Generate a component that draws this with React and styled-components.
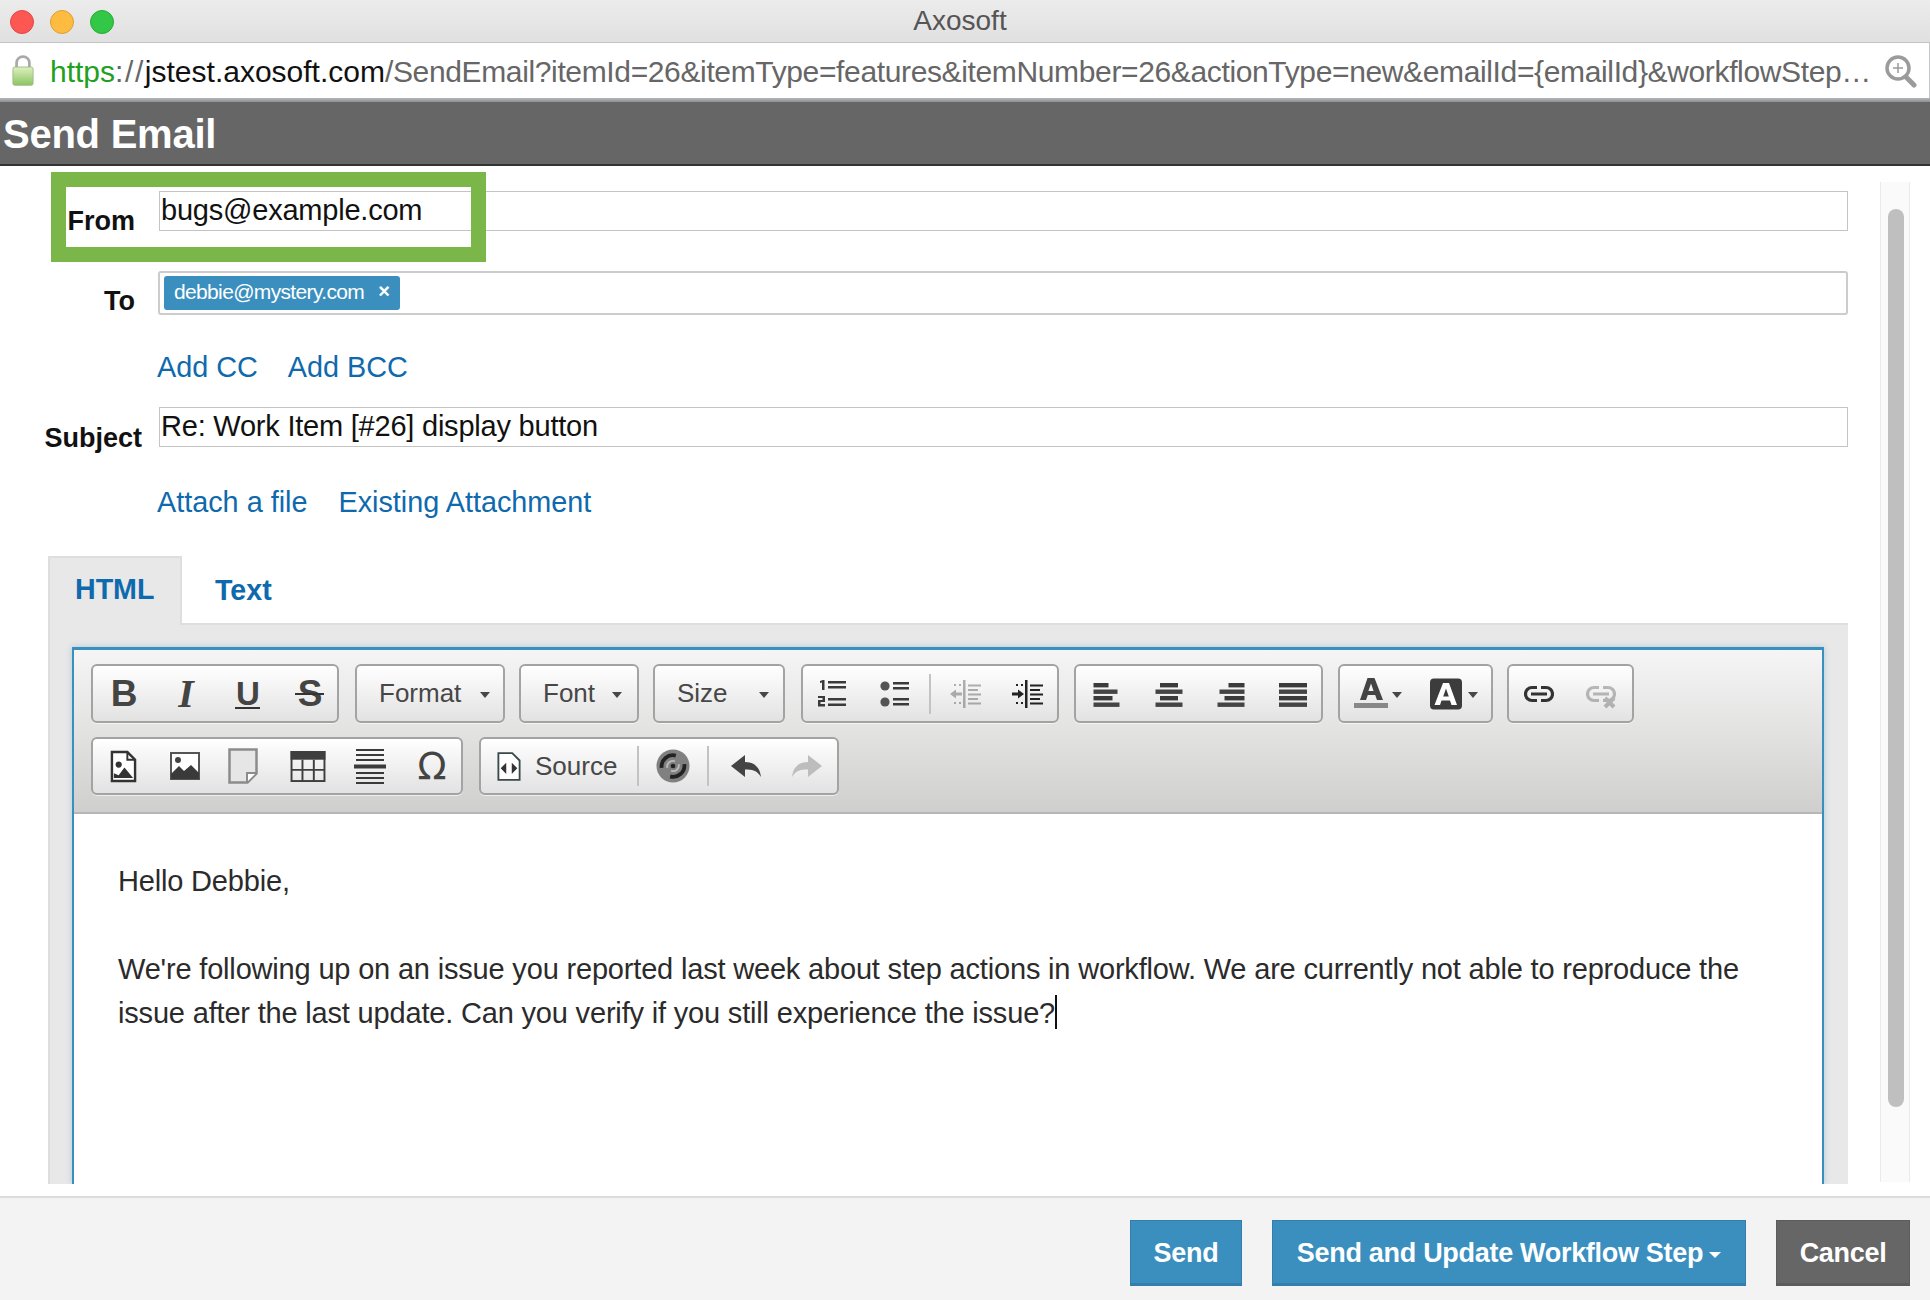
import React from "react";
import styled, { createGlobalStyle } from "styled-components";

const Global = createGlobalStyle`
  html, body { margin: 0; padding: 0; height: 100%; background: #fff; }
  #root { height: 1300px; }
  * { box-sizing: border-box; }
  body { font-family: "Liberation Sans", Arial, sans-serif; }
`;

const Page = styled.div`
  width: 1930px; height: 1300px; display: flex; flex-direction: column; overflow: hidden; background: #fff;
`;
const TitleBar = styled.div`
  height: 43px; flex: none; position: relative; display: flex; align-items: center; justify-content: center;
  background: linear-gradient(#ececec, #e0e0e0); border-bottom: 1px solid #c4c4c4;
  font-size: 28px; color: #555; padding-right: 10px;
`;
const Lights = styled.div`
  position: absolute; left: 10px; top: 10px; display: flex; gap: 16px;
`;
const Light = styled.span`
  width: 24px; height: 24px; border-radius: 50%; background: ${p => p.$c}; border: 1px solid ${p => p.$b};
`;
const AddressBar = styled.div`
  height: 55px; flex: none; display: flex; align-items: center; background: #fff; padding: 0 12px 0 12px;
  border-right: 1px solid #c4c8cc;
`;
const Url = styled.div`
  flex: 1; min-width: 0; margin-left: 16px; padding-top: 2px; font-size: 30px; color: #666; white-space: nowrap;
`;
const Https = styled.span` color: #1fa01f; `;
const Scheme = styled.span` letter-spacing: 1.6px; `;
const Host = styled.span` color: #111; `;
const UrlPath = styled.span` letter-spacing: -0.36px; `;
const AddressEdge = styled.div`
  height: 4px; flex: none; background: linear-gradient(#b4b8bc, #8d9094);
`;
const Header = styled.div`
  height: 64px; flex: none; background: #666; border-bottom: 2px solid #333; color: #fff;
  font-weight: 700; font-size: 40px; line-height: 65px; padding-left: 3px; letter-spacing: -0.25px;
`;
const Body = styled.div`
  flex: 1; min-height: 0; display: flex; overflow: hidden; position: relative;
`;
const Form = styled.div`
  width: 1848px; flex: none; height: 1018px; padding: 25px 0 0 0; overflow: hidden;
  display: flex; flex-direction: column;
`;
const Row = styled.div`
  display: flex; align-items: flex-start; position: relative; flex: none;
  height: ${p => p.$h}px;
  margin-top: ${p => p.$mt || 0}px;
`;
const Label = styled.div`
  width: ${p => p.$w || 135}px; margin-right: ${p => p.$mr || 23}px; text-align: right; font-weight: 700; font-size: 27px; color: #111; flex: none; padding-top: ${p => p.$pt || 0}px;
`;
const TextField = styled.div`
  flex: 1; height: 40px; border: 1px solid #c4c4c4; padding: 1px 0 0 1px; font-size: 29px; letter-spacing: -0.22px; line-height: 34px; color: #111; margin-left: 1px;
`;
const Highlight = styled.div`
  position: absolute; left: 51px; top: -19px; width: 435px; height: 90px; border: 15px solid #7ab648; pointer-events: none;
`;
const TagField = styled.div`
  flex: 1; height: 44px; border: 2px solid #ccc; border-radius: 3px; padding: 3px 4px;
`;
const Tag = styled.span`
  display: inline-flex; align-items: center; height: 34px; width: 236px; padding: 0 0 3px 10px; background: #3a8fbf; border-radius: 3px;
  color: #fff; font-size: 21px; letter-spacing: -0.65px;
`;
const TagX = styled.span`
  margin-left: 14px; font-weight: 700; font-size: 20px; letter-spacing: 0;
`;
const Links = styled.div`
  display: flex; flex: none; gap: ${p => p.$gap}px; padding-left: 157px; margin-top: ${p => p.$mt}px; font-size: 28.8px; line-height: 34px; color: #0e69ad;
`;
const Tabs = styled.div`
  display: flex; height: 69px; margin: 37px 0 0 48px; flex: none;
`;
const Tab = styled.div`
  width: ${p => p.$w}px; font-weight: 700; font-size: 28.6px; color: #0e69ad; padding: ${p => p.$active ? 15 : 18}px 0 0 ${p => p.$pl}px;
  background: ${p => p.$active ? "#e8e8e8" : "transparent"};
  border: ${p => p.$active ? "2px solid #dedede" : "none"};
  border-bottom: ${p => p.$active ? "none" : "2px solid #dedede"};
`;
const TabRule = styled.div`
  flex: 1; align-self: flex-end; height: 2px; background: #dedede;
`;
const Panel = styled.div`
  margin-left: 48px; flex: 1; min-height: 0; background: #e8e8e8; border-left: 2px solid #dedede; padding: 22px 24px 0 22px;
`;
const Editor = styled.div`
  height: 100%; border: 2px solid #3a8fbf; border-top-width: 3px; border-bottom: none; background: #fff; display: flex; flex-direction: column;
  box-shadow: 0 0 6px rgba(58,143,191,.35);
`;
const Toolbar = styled.div`
  height: 164px; flex: none; background: linear-gradient(#f5f5f5, #cfd0ce); border-bottom: 2px solid #b6b6b6;
  padding: 14px 0 0 17px; display: flex; flex-direction: column; gap: 14px;
`;
const ToolRow = styled.div`
  display: flex; gap: ${p => p.$gap}px;
`;
const Group = styled.div`
  width: ${p => p.$w}px; height: ${p => p.$h || 59}px; flex: none; display: flex; align-items: center; position: relative;
  border: 2px solid #a3a3a3; border-radius: 6px; background: linear-gradient(#fff, #e2e2e2);
  margin-left: ${p => p.$ml || 0}px;
  padding-left: ${p => p.$pl || 0}px; color: #444; box-shadow: 0 1px 0 rgba(255,255,255,.6);
`;
const Combo = styled(Group)`
  font-size: 26px; color: #474747; padding-left: 22px;
`;
const Caret = styled.span`
  position: absolute; right: ${p => p.$r}px; top: 26px; width: 0; height: 0;
  border-left: 5.5px solid transparent; border-right: 5.5px solid transparent; border-top: 6px solid #474747;
`;
const Tool = styled.span`
  width: ${p => p.$w || 62}px; flex: none; display: flex; align-items: center; justify-content: center; height: 100%; position: relative;
  opacity: ${p => p.$dim ? 0.38 : 1};
`;
const SansLetter = styled(Tool)`
  font-weight: 700; font-size: 37px; color: #444;
`;
const ItalicLetter = styled(Tool)`
  font-family: "Liberation Serif", serif; font-style: italic; font-weight: 700; font-size: 40px; color: #444;
`;
const UnderLetter = styled(SansLetter)`
  font-size: 33px;
  &::after { content: ""; position: absolute; left: 18px; width: 25px; top: 41px; height: 2px; background: #333; }
`;
const StrikeLetter = styled(SansLetter)`
  &::after { content: ""; position: absolute; left: 16px; width: 29px; top: 27px; height: 2px; background: #333; }
`;
const OmegaLetter = styled(Tool)`
  font-family: "DejaVu Sans", sans-serif; font-size: 38px; color: #444;
`;
const Sep = styled.span`
  width: 2px; height: 40px; flex: none; background: #c3c3c3;
`;
const SourceLabel = styled.span`
  font-size: 26px; color: #474747; margin: 0 20px 0 14px;
`;
const Content = styled.div`
  flex: 1; padding: 45px 60px 0 44px; font-size: 29px; line-height: 44px; color: #2b2b2b; letter-spacing: -0.18px;
`;
const Para = styled.p`
  margin: 0 0 44px 0;
`;
const CaretBar = styled.span`
  display: inline-block; width: 2px; height: 34px; background: #111; vertical-align: -6px;
`;
const ScrollTrack = styled.div`
  position: absolute; left: 1880px; top: 16px; width: 30px; height: 1000px; background: #fafafa;
  border-left: 1px solid #ebebeb; border-right: 1px solid #ebebeb;
`;
const ScrollThumb = styled.div`
  position: absolute; left: 7px; top: 27px; width: 16px; height: 898px; border-radius: 8px; background: #bfbfbf;
`;
const Footer = styled.div`
  height: 104px; flex: none; background: #f3f3f3; border-top: 2px solid #dcdcdc; display: flex; justify-content: flex-end;
  padding: 22px 20px 0 0; gap: 30px;
`;
const Button = styled.div`
  height: 66px; display: flex; align-items: center; justify-content: center; gap: 6px; width: ${p => p.$w}px; padding-top: 3px;
  background: ${p => p.$grey ? "#666" : "#3a8fbf"}; border: 1px solid ${p => p.$grey ? "#5c5c5c" : "#327fae"}; border-bottom-width: 3px;
  color: #fff; font-weight: 700; font-size: 27px; letter-spacing: -0.3px;
`;
const BtnCaret = styled.span`
  width: 0; height: 0; border-left: 6px solid transparent; border-right: 6px solid transparent; border-top: 6px solid #fff; margin-top: 3px;
`;

const I = ({ w = 32, h = 32, vb = "0 0 32 32", children, c = "#3a3a3a" }) => (
  <svg width={w} height={h} viewBox={vb} fill={c} stroke="none">{children}</svg>
);

const Lock = () => (
  <svg width="22" height="33" viewBox="0 0 24 38" preserveAspectRatio="none">
    <path d="M5 17V10a7 7 0 0 1 14 0v7" fill="none" stroke="#a9a9a9" strokeWidth="3" />
    <defs><linearGradient id="lk" x1="0" y1="0" x2="0" y2="1"><stop offset="0" stopColor="#dff0c0" /><stop offset="1" stopColor="#8cc463" /></linearGradient></defs>
    <rect x="1" y="15" width="22" height="21" rx="2" fill="url(#lk)" stroke="#9bb985" />
  </svg>
);
const Zoom = () => (
  <svg width="32" height="36" viewBox="0 0 32 36">
    <circle cx="13" cy="15" r="11" fill="#fff" stroke="#9b9b9b" strokeWidth="3.5" />
    <path d="M21 24l8 8" stroke="#9b9b9b" strokeWidth="5" strokeLinecap="round" />
    <path d="M13 10v10M8 15h10" stroke="#9b9b9b" strokeWidth="1.5" />
  </svg>
);
const OL = () => (
  <I>
    <path d="M4 3l3-1h1.500v10H6V4.500L4 5zM2 18h7v6H4.500v2H9v2.500H2V22h4.500v-2H2z" />
    <path d="M12 3h18v2.600H12zM12 8h18v2.600H12zM12 20h18v2.600H12zM12 25.500h18v2.600H12z" />
  </I>
);
const UL = () => (
  <I>
    <circle cx="6" cy="8" r="4.600" fill="#555" /><circle cx="6" cy="24" r="4.600" fill="#555" />
    <path d="M14 4h16v2.600H14zM14 9h16v2.600H14zM14 20h16v2.600H14zM14 25h16v2.600H14z" />
  </I>
);
const Indent = ({ flip, c }) => (
  <I c={c}>
    <rect x="14" y="2" width="2.500" height="28" />
    <path d="M19 6.500h13v2H19zM19 11h10v2H19zM19 15.500h13v2H19zM19 20h10v2H19zM19 24.500h13v2H19z" />
    <path d="M5 6h2v2H5zM10 6h2v2h-2zM5 24h2v2H5zM10 24h2v2h-2z" />
    {flip
      ? <path d="M1 16l6-4.500v3h6v3H7v3z" />
      : <path d="M13 16l-6-4.500v3H1v3h6v3z" />}
  </I>
);
const Align = ({ rows }) => (
  <I>
    {rows.map((r, k) => <rect key={k} x={r[0]} y={5 + k * 6.5} width={r[1]} height="4.400" fill={k % 2 ? "#444" : "#3a3a3a"} />)}
  </I>
);
const FontColor = () => (
  <I vb="0 0 34 34" w={34} h={34}>
    <path d="M13.500 1h7L29 23h-6l-1.800-5h-7.400L12 23H6zM17 6.500L14.400 14h5.200z" fill="#444" fillRule="evenodd" />
    <rect x="0" y="26" width="34" height="5" fill="#888" />
  </I>
);
const BgColor = () => (
  <I>
    <rect x="0" y="0.500" width="32" height="31" rx="4" fill="#3c3c3c" />
    <path d="M13 5h6l8 22h-5.500L20 22.500h-8.500L10 27H4.500zM16 10.500L13.200 18.500h5.600z" fill="#fff" fillRule="evenodd" />
  </I>
);
const Chain = ({ c = "#333", x }) => (
  <svg width="30" height="30" viewBox="0 0 30 30" fill="none" stroke={c} strokeWidth="3.200">
    <path d="M13 8.500H8a6.500 6.500 0 0 0 0 13h5M17 8.500h5a6.500 6.500 0 0 1 0 13h-5M7 15h16" />
    {x && <path d="M19 19l9 9M28 19l-9 9" strokeWidth="4" />}
  </svg>
);
const ImgDoc = () => (
  <I vb="0 0 28 34" w={27} h={33}>
    <path d="M2 2h16l8 8v22H2z" fill="#fff" stroke="#333" strokeWidth="2.500" />
    <path d="M18 2v8h8" fill="none" stroke="#333" strokeWidth="2" />
    <circle cx="9" cy="15" r="3.200" fill="#333" />
    <path d="M4 29v-5l5 2 6-8 9 11z" fill="#333" />
  </I>
);
const Pic = () => (
  <I vb="0 0 30 28" w={30} h={28}>
    <rect x="1" y="1" width="28" height="26" fill="#fff" stroke="#555" strokeWidth="2" />
    <circle cx="8" cy="8" r="3" fill="#444" />
    <path d="M1 27v-5l8-8 5 5 7-6 8 8v6z" fill="#3a3a3a" />
  </I>
);
const Blank = () => (
  <I vb="0 0 30 36" w={30} h={36}>
    <path d="M1.500 1.500h27v24l-9 9h-18z" fill="#e6e6e6" stroke="#8c8c8c" strokeWidth="2.500" />
    <path d="M28 25h-9v9" fill="#fff" stroke="#8c8c8c" strokeWidth="2" />
  </I>
);
const TableI = () => (
  <I vb="0 0 36 32" w={36} h={31}>
    <rect x="0" y="0" width="36" height="9" fill="#3f3f3f" />
    <rect x="1" y="1" width="34" height="30" fill="none" stroke="#3f3f3f" strokeWidth="2" />
    <path d="M12.300 9v22M24 9v22M1 19.500h34" stroke="#3f3f3f" strokeWidth="2" />
  </I>
);
const Hr = () => (
  <I vb="0 0 32 36" w={32} h={36}>
    <path d="M2 1h28v2H2zM2 6h28v2H2zM2 11h28v2H2zM0 16.500h32v4H0zM2 24h28v2H2zM2 29h28v2H2zM2 34h28v2H2z" />
  </I>
);
const SourceI = () => (
  <I vb="0 0 26 32" w={24} h={31}>
    <path d="M1.500 1.500h15l8 8v21h-23z" fill="#fff" stroke="#3a4a4a" strokeWidth="2" />
    <path d="M10 12l-6 6 6 6zM16 12l6 6-6 6z" fill="#333" />
  </I>
);
const Spell = () => (
  <svg width="34" height="34" viewBox="0 0 36 36" fill="none">
    <circle cx="18" cy="18" r="17.500" fill="#808080" />
    <path d="M6 20a12 12 0 0 1 15-13M30 16a12 12 0 0 1-15 13" stroke="#222" strokeWidth="4" />
    <path d="M12 20a6 6 0 0 1 8-7M24 16a6 6 0 0 1-8 7" stroke="#bbb" strokeWidth="2" />
    <circle cx="18" cy="18" r="2.500" fill="#222" />
  </svg>
);
const Undo = ({ c, flip }) => (
  <svg width="30" height="22" viewBox="0 0 30 22" fill={c} style={flip ? { transform: "scaleX(-1)" } : undefined}>
    <path d="M0 11L14 0v7c10 0 15 6 16 15-4-7-9-7.500-16-7.500V22z" />
  </svg>
);

const alignSets = {
  left: [[2.5, 15], [2.5, 24], [2.5, 19], [2.5, 26]],
  center: [[7, 18], [2.5, 27], [7, 18], [2.5, 27]],
  right: [[13.5, 16], [4.5, 25], [9.5, 20], [2.5, 27]],
  full: [[2, 28], [2, 28], [2, 28], [2, 28]],
};

export default function App() {
  return (
    <Page>
      <Global />
      <TitleBar>
        <Lights>
          <Light $c="#fc5753" $b="#df4744" />
          <Light $c="#fdbc40" $b="#de9f34" />
          <Light $c="#33c748" $b="#27aa35" />
        </Lights>
        Axosoft
      </TitleBar>
      <AddressBar>
        <Lock />
        <Url>
          <Https>https</Https><Scheme>://</Scheme><Host>jstest.axosoft.com</Host><UrlPath>/SendEmail?itemId=26&amp;itemType=features&amp;itemNumber=26&amp;actionType=new&amp;emailId=&#123;emailId&#125;&amp;workflowStep…</UrlPath>
        </Url>
        <Zoom />
      </AddressBar>
      <AddressEdge />
      <Header>Send Email</Header>
      <Body>
        <Form>
          <Row $h={40}>
            <Label $pt={15}>From</Label>
            <TextField>bugs@example.com</TextField>
            <Highlight />
          </Row>
          <Row $h={44} $mt={40}>
            <Label $pt={15}>To</Label>
            <TagField>
              <Tag>debbie@mystery.com<TagX>×</TagX></Tag>
            </TagField>
          </Row>
          <Links $mt={35} $gap={30}><span>Add CC</span><span>Add BCC</span></Links>
          <Row $h={40} $mt={23}>
            <Label $w={142} $mr={16} $pt={16}>Subject</Label>
            <TextField>Re: Work Item [#26] display button</TextField>
          </Row>
          <Links $mt={38} $gap={31}><span>Attach a file</span><span>Existing Attachment</span></Links>
          <Tabs>
            <Tab $active $w={134} $pl={25}>HTML</Tab>
            <Tab $w={93} $pl={33}>Text</Tab>
            <TabRule />
          </Tabs>
          <Panel>
            <Editor>
              <Toolbar>
                <ToolRow $gap={14}>
                  <Group $w={248}>
                    <SansLetter>B</SansLetter>
                    <ItalicLetter>I</ItalicLetter>
                    <UnderLetter>U</UnderLetter>
                    <StrikeLetter>S</StrikeLetter>
                  </Group>
                  <Combo $w={150} $ml={2}>Format<Caret $r={13} /></Combo>
                  <Combo $w={120}>Font<Caret $r={15} /></Combo>
                  <Combo $w={132}>Size<Caret $r={14} /></Combo>
                  <Group $w={258} $ml={2}>
                    <Tool $w={58}><OL /></Tool>
                    <Tool $w={68}><UL /></Tool>
                    <Sep />
                    <Tool $w={68} $dim><Indent flip /></Tool>
                    <Tool $w={56}><Indent c="#222" /></Tool>
                  </Group>
                  <Group $w={249} $ml={1}>
                    <Tool><Align rows={alignSets.left} /></Tool>
                    <Tool><Align rows={alignSets.center} /></Tool>
                    <Tool><Align rows={alignSets.right} /></Tool>
                    <Tool><Align rows={alignSets.full} /></Tool>
                  </Group>
                  <Group $w={155} $ml={1}>
                    <Tool $w={62}><FontColor /></Tool>
                    <Caret $r={89} />
                    <Tool $w={88}><BgColor /></Tool>
                    <Caret $r={13} />
                  </Group>
                  <Group $w={127}>
                    <Tool $w={60}><Chain /></Tool>
                    <Tool $w={64} $dim><Chain c="#555" x /></Tool>
                  </Group>
                </ToolRow>
                <ToolRow $gap={16}>
                  <Group $w={372} $h={58}>
                    <Tool $w={60}><ImgDoc /></Tool>
                    <Tool $w={64}><Pic /></Tool>
                    <Tool $w={52}><Blank /></Tool>
                    <Tool $w={78}><TableI /></Tool>
                    <Tool $w={46}><Hr /></Tool>
                    <OmegaLetter $w={78}>Ω</OmegaLetter>
                  </Group>
                  <Group $w={360} $h={58} $pl={16}>
                    <SourceI />
                    <SourceLabel>Source</SourceLabel>
                    <Sep />
                    <Tool $w={68}><Spell /></Tool>
                    <Sep />
                    <Tool $w={73}><Undo c="#444" /></Tool>
                    <Tool $w={50}><Undo c="#bdbdbd" flip /></Tool>
                  </Group>
                </ToolRow>
              </Toolbar>
              <Content>
                <Para>Hello Debbie,</Para>
                <Para>We're following up on an issue you reported last week about step actions in workflow. We are currently not able to reproduce the issue after the last update. Can you verify if you still experience the issue?<CaretBar /></Para>
              </Content>
            </Editor>
          </Panel>
        </Form>
        <ScrollTrack><ScrollThumb /></ScrollTrack>
      </Body>
      <Footer>
        <Button $w={112}>Send</Button>
        <Button $w={474}>Send and Update Workflow Step<BtnCaret /></Button>
        <Button $grey $w={134}>Cancel</Button>
      </Footer>
    </Page>
  );
}
